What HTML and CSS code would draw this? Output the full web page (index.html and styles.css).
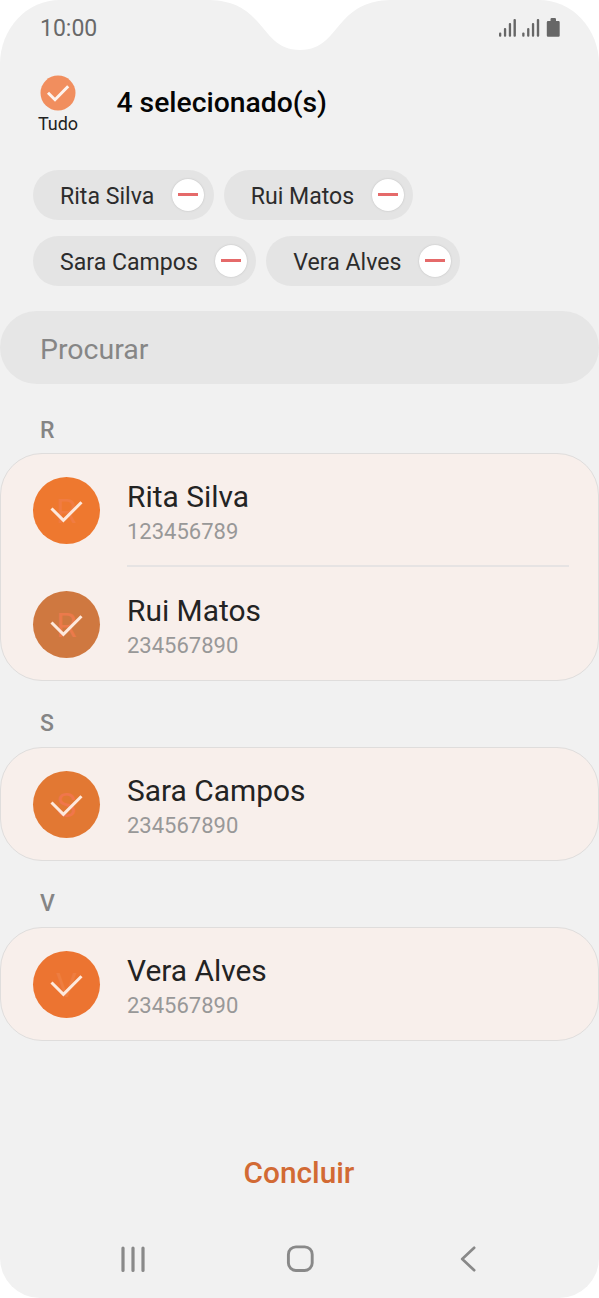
FILE: index.html
```html
<!DOCTYPE html>
<html lang="pt">
<head>
<meta charset="utf-8">
<title>Selecionar contactos</title>
<link rel="stylesheet" href="styles.css">
</head>
<body>
<main class="phone">
  <svg class="notch" width="200" height="52" viewBox="0 0 200 52"><path d="M10 0C32 1 44 7 57 21C69 34 77 50 100 50C123 50 131 34 143 21C156 7 168 1 190 0Z" fill="#fff"/></svg>
  <header class="status">
    <span class="time">10:00</span>
    <svg width="62" height="22" viewBox="0 0 62 22" fill="#676767">
      <rect x="0" y="14.5" width="2.3" height="4.2" rx="1"/><rect x="4.9" y="10" width="2.3" height="8.7" rx="1"/><rect x="9.8" y="5" width="2.3" height="13.7" rx="1"/><rect x="14.5" y="1" width="2.4" height="17.7" rx="1"/>
      <rect x="23.2" y="14.5" width="2.3" height="4.2" rx="1"/><rect x="28.1" y="10" width="2.3" height="8.7" rx="1"/><rect x="32.9" y="5" width="2.3" height="13.7" rx="1"/><rect x="37.8" y="1" width="2.4" height="17.7" rx="1"/>
      <path d="M49 3H51.5V1.2Q51.5 0 52.7 0H55.8Q57 0 57 1.2V3H59.5Q60.7 3 60.7 4.2V17.5Q60.7 18.7 59.5 18.7H49Q47.8 18.7 47.8 17.5V4.2Q47.8 3 49 3Z"/>
    </svg>
  </header>
  <section class="selection">
    <div class="all">
      <svg width="36" height="36" viewBox="0 0 36 36"><circle cx="18" cy="18" r="17.5" fill="#f18e5e"/><path d="M8 17.8L15 24.7L28.2 11.2" fill="none" stroke="#fdf3ee" stroke-width="3"/></svg>
      <span>Tudo</span>
    </div>
    <h1 class="title">4 selecionado(s)</h1>
  </section>
  <section class="chips">
    <div class="chip"><span>Rita Silva</span><i class="remove"></i></div>
    <div class="chip"><span>Rui Matos</span><i class="remove"></i></div>
    <div class="chip"><span>Sara Campos</span><i class="remove"></i></div>
    <div class="chip"><span>Vera Alves</span><i class="remove"></i></div>
  </section>
  <div class="search">Procurar</div>

  <h2 class="letter">R</h2>
  <section class="card">
    <article class="contact">
      <div class="avatar rita"><span>R</span><svg width="67" height="67" viewBox="0 0 67 67"><path d="M18.5 31.5L30.4 43.3L48.5 25.3"/></svg></div>
      <div class="info"><b class="name">Rita Silva</b><span class="number">123456789</span></div>
    </article>
    <article class="contact">
      <div class="avatar rui"><span>R</span><svg width="67" height="67" viewBox="0 0 67 67"><path d="M18.5 31.5L30.4 43.3L48.5 25.3"/></svg></div>
      <div class="info"><b class="name">Rui Matos</b><span class="number">234567890</span></div>
    </article>
  </section>

  <h2 class="letter">S</h2>
  <section class="card">
    <article class="contact">
      <div class="avatar sara"><span>S</span><svg width="67" height="67" viewBox="0 0 67 67"><path d="M18.5 31.5L30.4 43.3L48.5 25.3"/></svg></div>
      <div class="info"><b class="name">Sara Campos</b><span class="number">234567890</span></div>
    </article>
  </section>

  <h2 class="letter">V</h2>
  <section class="card">
    <article class="contact">
      <div class="avatar vera"><span>V</span><svg width="67" height="67" viewBox="0 0 67 67"><path d="M18.5 31.5L30.4 43.3L48.5 25.3"/></svg></div>
      <div class="info"><b class="name">Vera Alves</b><span class="number">234567890</span></div>
    </article>
  </section>

  <div class="done">Concluir</div>
  <nav class="nav">
    <svg width="28" height="28" viewBox="0 0 28 28"><path d="M4 3V25.5M14 3V25.5M24 3V25.5" stroke-width="3.2"/></svg>
    <svg width="28" height="28" viewBox="0 0 28 28"><rect x="2.4" y="1.9" width="23.8" height="23.6" rx="7.5" stroke-width="2.9"/></svg>
    <svg width="28" height="28" viewBox="0 0 28 28"><path d="M20.2 2.8L8.2 14L20.2 25.2" stroke-width="2.7"/></svg>
  </nav>
</main>
</body>
</html>
```
FILE: styles.css
```css
* { box-sizing: border-box; }
body {
  margin: 0;
  background: #fff;
  font-family: Roboto, sans-serif;
}
.phone {
  position: relative;
  display: flex;
  flex-direction: column;
  width: 599px;
  height: 1298px;
  overflow: hidden;
  background: #f1f1f1;
  border-radius: 60px 60px 40px 40px / 64px 64px 40px 40px;
}
.notch { position: absolute; top: 0; left: 200px; }
.status {
  display: flex;
  justify-content: space-between;
  height: 56px;
  padding: 14px 38px 0 40px;
  line-height: 28px;
}
.status svg { margin-top: 4px; }
.time { padding-top: 1px; font-size: 23px; color: #696969; }
.selection {
  display: flex;
  height: 114px;
  padding: 19px 0 0 38px;
}
.all {
  display: flex;
  flex-direction: column;
  align-items: center;
  width: 40px;
  font-size: 18px;
  line-height: 25px;
  color: #222;
}
.title {
  margin: 10px 0 0 38.5px;
  font-size: 28.3px;
  font-weight: 500;
  line-height: 36px;
  color: #050505;
}
.chips {
  display: flex;
  flex-wrap: wrap;
  align-content: flex-start;
  gap: 16px 10px;
  height: 141px;
  padding: 0 100px 0 33px;
}
.chip {
  display: flex;
  align-items: center;
  gap: 17.5px;
  height: 50px;
  padding: 0 9px 0 27px;
  border-radius: 25px;
  background: #e4e4e4;
  font-size: 23.1px;
  color: #2c2c2c;
}
.chip:first-child { padding-right: 9.5px; gap: 18px; }
.chip span { padding-top: 2px; }
.remove {
  display: flex;
  align-items: center;
  justify-content: center;
  width: 32px;
  height: 32px;
  margin-bottom: 1px;
  border-radius: 50%;
  background: #fff;
  box-shadow: 0 0 2px #bbb;
}
.remove::before {
  content: "";
  width: 20px;
  height: 3px;
  background: #e56a6a;
}
.search {
  height: 73px;
  padding: 2px 40px 0;
  border-radius: 37px;
  background: #e6e6e6;
  font-size: 28.5px;
  line-height: 73px;
  color: #868686;
}
.letter {
  height: 66px;
  margin: 0;
  padding: 26px 0 0 40px;
  font-size: 23px;
  font-weight: 500;
  line-height: 34px;
  color: #858585;
}
.search + .letter { height: 69px; padding-top: 29.5px; }
.card {
  border: 1px solid #dfdddc;
  border-radius: 42px;
  background: #f8efeb;
}
.contact {
  display: flex;
  gap: 27px;
  height: 112px;
  padding: 23px 29px 0 32px;
}
.contact:not(:last-child) { height: 114px; padding-bottom: 1px; }
.contact:not(:last-child) .info { border-bottom: 2px solid #e6e3e3; }
.avatar {
  display: grid;
  flex: none;
  width: 67px;
  height: 67px;
  border-radius: 50%;
  text-align: center;
  font-size: 33px;
  line-height: 70px;
}
.avatar > * { grid-area: 1 / 1; }
.avatar path { fill: none; stroke: #fde9dd; stroke-width: 3; }
.rita { background: #ee782f; color: #f07c42; }
.rui { background: #cf7840; color: #eb7a4b; }
.sara { background: #e27833; color: #f0764b; }
.vera { background: #ec7431; color: #ee7d40; }
.info {
  display: flex;
  flex: 1;
  flex-direction: column;
}
.name {
  font-size: 29.9px;
  font-weight: 400;
  line-height: 40px;
  color: #232323;
}
.number {
  font-size: 22px;
  line-height: 30px;
  color: #989898;
}
.done {
  margin-top: 112px;
  padding-right: 1px;
  font-size: 29.8px;
  font-weight: 500;
  line-height: 40px;
  text-align: center;
  color: #d26a34;
}
.nav {
  display: flex;
  justify-content: space-between;
  margin-top: 52px;
  padding: 0 117.5px 0 119px;
}
.nav svg {
  fill: none;
  stroke: #898989;
  stroke-linecap: round;
  stroke-linejoin: round;
}
```
